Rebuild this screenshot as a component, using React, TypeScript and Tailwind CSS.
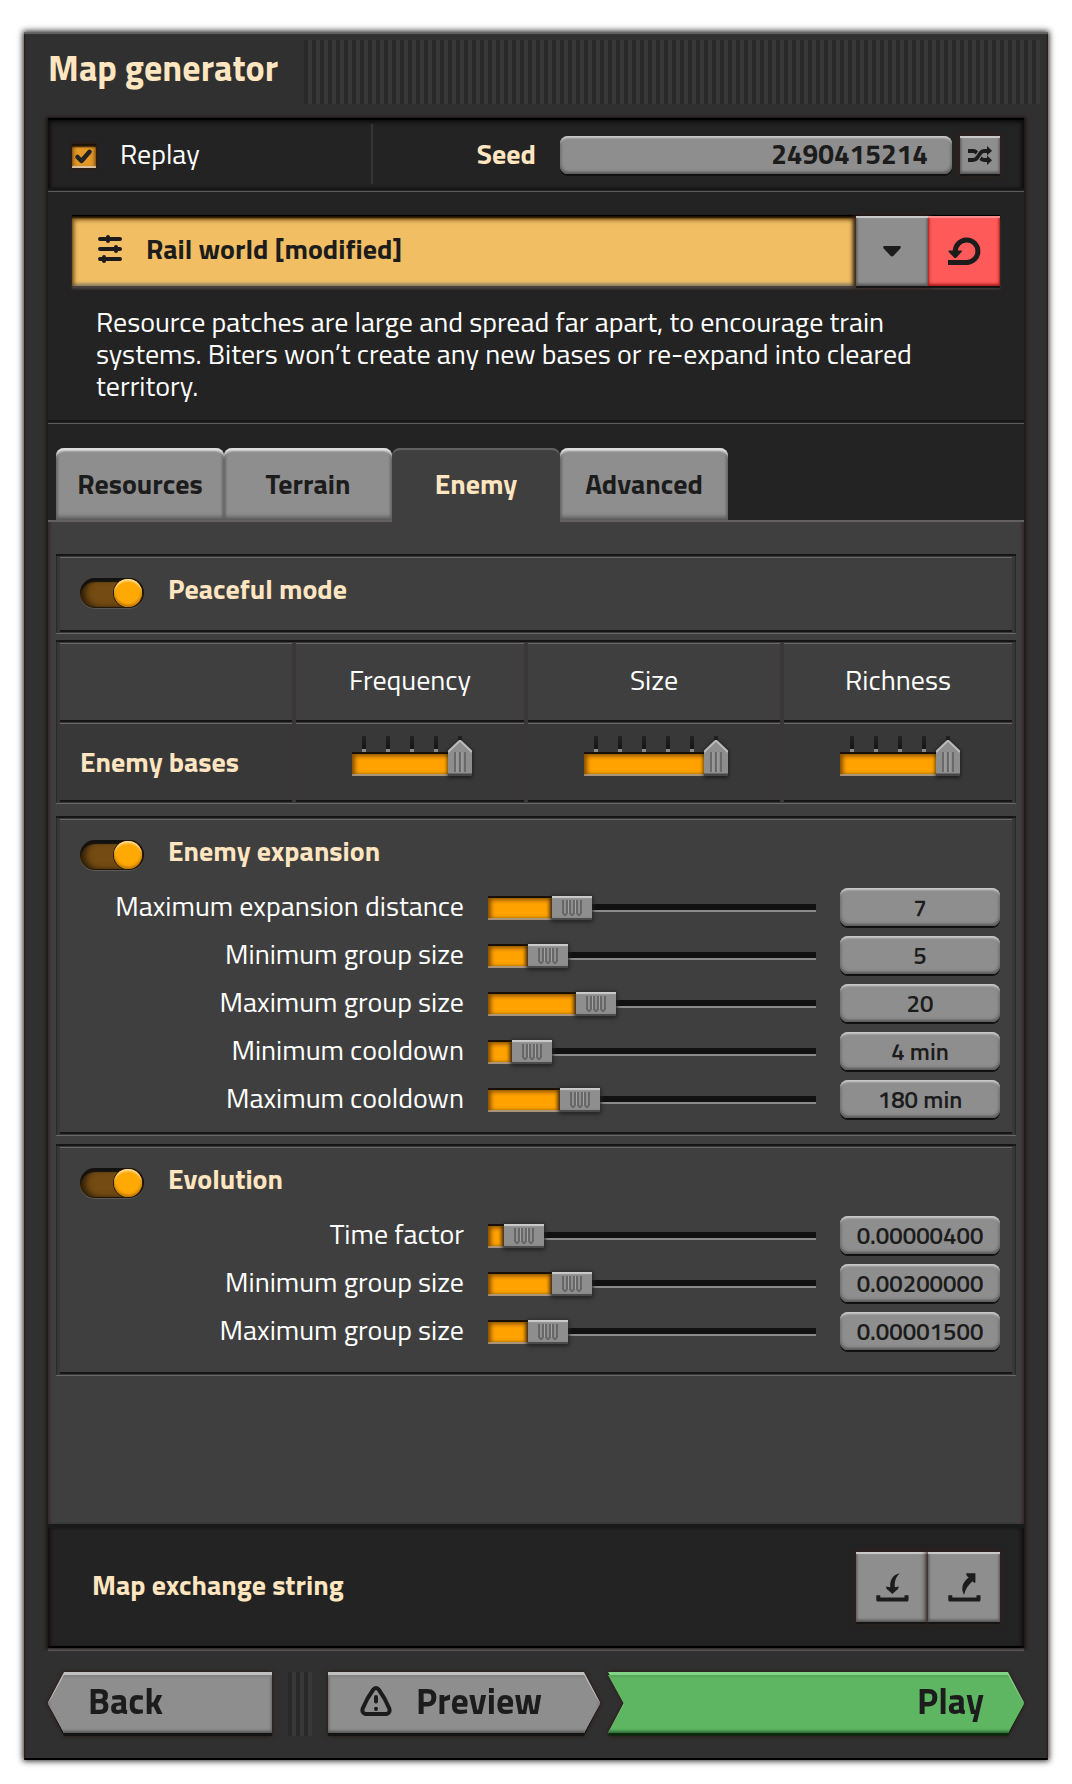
import React, { useState } from 'react';
import type { ReactNode } from 'react';

const BEVEL =
  'bg-[#8e8e8e] text-[#1c1c1c] shadow-[inset_0_3px_1px_-1px_#cdcbcb,inset_2px_0_3px_-1px_#5b5a5a,inset_-2px_0_3px_-1px_#5b5a5a,inset_0_-3px_3px_-1px_#555,0_2px_0_#161515,0_0_5px_2px_#2e201c]';

const RED_BEVEL =
  'bg-[#fe5a5a] text-[#1c1c1c] shadow-[inset_0_3px_1px_-1px_#ff8e8e,inset_2px_0_3px_-1px_#a01818,inset_-2px_0_3px_-1px_#a01818,inset_0_-3px_3px_-1px_#b02020,0_2px_0_#161515]';

const BEVEL_FIELD =
  'rounded-lg bg-[#8e8e8e] text-[#1c1c1c] outline-none shadow-[inset_0_3px_2px_-1px_#cdcbcb,inset_2px_0_3px_-1px_#666,inset_-2px_0_3px_-1px_#666,inset_0_-3px_3px_-1px_#555,0_2px_0_#111]';

const FILL =
  'h-6 bg-[#ffa200] shadow-[inset_0_3px_0_-1px_#171105,inset_0_5px_4px_-1px_#8a5000,inset_0_-2px_0_#a8967a,inset_4px_0_4px_-1px_#8a5000,inset_-3px_0_4px_-1px_#8a5000,inset_0_-5px_3px_-2px_#c88000]';

const CELL = 'h-[76px] shadow-[0_-1px_0_#6a696a,0_2px_0_#171616]';

function Groove() {
  return <div className="h-1 shrink-0 bg-[linear-gradient(#171616_50%,#242324_50%,#242324_75%,#5c5b5c_75%)]" />;
}

function ShuffleIcon() {
  return (
    <svg viewBox="0 0 24 19" className="h-[19px] w-6" fill="none" stroke="currentColor" strokeWidth="3.800">
      <path d="M0 5H5Q7.500 5 9 7L12.500 12Q14 14 16 14H20" />
      <path d="M0 14H5Q7.500 14 9 12L12.500 7Q14 5 16 5H20" stroke="#8e8e8e" strokeWidth="6" />
      <path d="M0 14H5Q7.500 14 9 12L12.500 7Q14 5 16 5H20" />
      <path d="M0 5H5Q6.500 5 7.500 6" />
      <path d="M19 0L24 4.800L19 9.400ZM19 9.600L24 14.200L19 19Z" fill="currentColor" stroke="none" />
    </svg>
  );
}

function PresetIcon() {
  return (
    <svg viewBox="0 0 24 28" className="h-7 w-6" fill="none" stroke="currentColor" strokeWidth="4" strokeLinecap="round">
      <path d="M2 4H22M2 14H22M2 24H22" />
      <path d="M10 2V6M18 12V16M6 22V26" />
    </svg>
  );
}

function ResetIcon() {
  return (
    <svg viewBox="0 0 33 28" className="h-7 w-[33px]" fill="none" stroke="currentColor" strokeWidth="5">
      <path d="M0 25.500H18.700A11.300 11.300 0 1 0 7.300 14.500" />
      <path d="M1 13.500H13.500Q14.500 14 13.500 15L8.500 20.500Q7.200 21.500 6 20.500L0.800 15Q0 14 1 13.500Z" fill="currentColor" stroke="none" />
    </svg>
  );
}

function ImportIcon() {
  return (
    <svg viewBox="0 0 33 29" className="h-[29px] w-[33px]" fill="currentColor">
      <path d="M0.300 22.300H4.300V24.500H28.500V22.300H32.500V27Q32.500 28.600 31 28.600H2Q0.300 28.600 0.300 27Z" />
      <path d="M10 13.500L14.300 14.200C13.600 7 17 1.500 23.700 0.300C19.800 4 18.400 8.500 18.800 14.200L22.700 13.500Q22.700 15.800 20.800 17L16.300 20.900L12 17Q10 15.800 10 13.500Z" />
    </svg>
  );
}

function ExportIcon() {
  return (
    <svg viewBox="0 0 33 29" className="h-[29px] w-[33px]" fill="currentColor">
      <path d="M0.300 22.300H4.300V24.500H28.500V22.300H32.500V27Q32.500 28.600 31 28.600H2Q0.300 28.600 0.300 27Z" />
      <path d="M18 0.300H27.400V9.700Q25.800 10 24.500 8.200C20 12 17.500 16 16 21.900C12.600 15 14.500 9 20.700 4.500Q18.200 3 18 0.300Z" />
    </svg>
  );
}

function WarningIcon() {
  return (
    <svg viewBox="0 0 32 30" className="h-[30px] w-8" fill="none" stroke="currentColor" strokeWidth="4" strokeLinejoin="round" strokeLinecap="round">
      <path d="M13.300 3.500Q16 0.500 18.700 3.500Q25 12 29.300 22.500Q30.500 27 26.500 28H5.500Q1.500 27 2.700 22.500Q7 12 13.300 3.500Z" />
      <path d="M16 11V15.500M16 22.800V23" />
    </svg>
  );
}

function Section({ children, tail = 'pb-5' }: { children: ReactNode; tail?: string }) {
  return (
    <section className="bg-[#393737] p-1 shadow-[inset_0_2px_0_#171616,inset_0_-1px_0_#6a696a,inset_1px_0_1px_#2a2929,inset_-1px_0_1px_#2a2929]">
      <div className={`${tail} bg-[#403f40] pl-5 pr-3 pt-5 shadow-[0_-1px_0_#6a696a,0_2px_0_#171616]`}>{children}</div>
    </section>
  );
}

function SectionSwitch({ id, label }: { id: string; label: string }) {
  return (
    <div className="flex h-8 items-start gap-6">
      <input
        id={id}
        type="checkbox"
        role="switch"
        defaultChecked
        className="relative h-[30px] w-16 shrink-0 appearance-none rounded-full bg-[#3a2c18] shadow-[inset_0_4px_1px_#131211,inset_5px_0_6px_#2c1d08,inset_-1px_-1px_1px_#131211,0_1px_1px_#5b5a5a] before:absolute before:left-0 before:top-px before:h-7 before:w-7 before:rounded-full before:bg-[#8e8e8e] before:content-[''] checked:bg-[#744b12] checked:before:left-[34px] checked:before:bg-[#ffaa04] checked:before:shadow-[inset_0_3px_2px_-1px_#ffe1a0,inset_0_-2px_3px_#b87400,0_0_0_1px_#241a0b]"
      />
      <label htmlFor={id} className="text-[28px] font-bold leading-[22px] text-[#ffe6c0]">
        {label}
      </label>
    </div>
  );
}

function RangeRow({ id, label, start, value }: { id: string; label: string; start: number; value: string }) {
  const [pos, setPos] = useState(start);
  const share = pos / 36;
  return (
    <div className="grid grid-cols-[1fr_328px_160px] gap-6">
      <label htmlFor={id} className="text-right text-[28px] leading-9 text-white">
        {label}
      </label>
      <div className="relative flex h-10 items-center">
        <div className="absolute inset-x-0 top-4 h-2 border-b-2 border-[#8c8b8b] bg-[#111]" />
        <div className="absolute left-0 top-2" style={{ width: `calc((100% - 40px) * ${share})` }}>
          <div className={FILL} />
        </div>
        <div
          className="absolute top-2 flex h-6 w-10 items-center justify-center bg-[#8e8e8e] shadow-[inset_0_3px_1px_-1px_#cdcbcb,inset_0_-3px_1px_-1px_#494848,0_1px_4px_1px_#222]"
          style={{ left: `calc((100% - 40px) * ${share})` }}
        >
          <svg viewBox="0 0 20 16" className="h-4 w-5" fill="none">
            <path d="M1 0V13L3 15.500L5 13V0M8 0V13L10 15.500L12 13V0M15 0V13L17 15.500L19 13V0" stroke="#686767" strokeWidth="2" />
            <path d="M6.500 0V13M13.500 0V13" stroke="#a5a4a4" />
          </svg>
        </div>
        <input
          id={id}
          type="range"
          min={0}
          max={36}
          value={pos}
          onChange={(e) => setPos(Number(e.target.value))}
          className="absolute inset-0 h-full w-full opacity-0"
        />
      </div>
      <input
        aria-label={`${label} value`}
        defaultValue={value}
        className={`${BEVEL_FIELD} h-[38px] w-full min-w-0 text-center text-[24px] font-semibold`}
      />
    </div>
  );
}

function NotchSlider({ label, steps }: { label: string; steps: number }) {
  const [value, setValue] = useState(steps - 1);
  return (
    <div className="relative mx-auto h-10" style={{ width: steps * 24 }}>
      <div className="flex justify-between px-[10px]">
        {Array.from({ length: steps }, (_, i) => (
          <div key={i} className="h-4 w-1 bg-[linear-gradient(#222_0,#161616_80%,#8c8b8b_81%)]" />
        ))}
      </div>
      <div className={FILL} />
      <svg viewBox="0 0 24 36" className="absolute bottom-0 h-9 w-6 drop-shadow-[0_1px_2px_#111]" style={{ left: value * 24 }}>
        <path d="M0 12L12 0.500L24 12V36H0Z" fill="#8e8e8e" />
        <path d="M0 12L12 0.500L24 12" fill="none" stroke="#bdbcbc" strokeWidth="2" />
        <path d="M0 33.500H24V36H0Z" fill="#474646" />
        <path d="M7 12V32M12 12V32M17 12V32" stroke="#6a6969" strokeWidth="2" />
        <path d="M9 12V32M14 12V32" stroke="#a5a4a4" />
      </svg>
      <input
        aria-label={`Enemy bases ${label}`}
        type="range"
        min={0}
        max={steps - 1}
        value={value}
        onChange={(e) => setValue(Number(e.target.value))}
        className="absolute inset-0 h-full w-full opacity-0"
      />
    </div>
  );
}

const levels = [
  { name: 'Frequency', steps: 5, width: 'w-[228px]' },
  { name: 'Size', steps: 6, width: 'w-[252px]' },
  { name: 'Richness', steps: 5, width: 'w-[228px]' },
];

const expansion = [
  { id: 'exp-dist', label: 'Maximum expansion distance', start: 8, value: '7' },
  { id: 'exp-min', label: 'Minimum group size', start: 5, value: '5' },
  { id: 'exp-max', label: 'Maximum group size', start: 11, value: '20' },
  { id: 'exp-mincd', label: 'Minimum cooldown', start: 3, value: '4 min' },
  { id: 'exp-maxcd', label: 'Maximum cooldown', start: 9, value: '180 min' },
];

const evolution = [
  { id: 'evo-time', label: 'Time factor', start: 2, value: '0.00000400' },
  { id: 'evo-min', label: 'Minimum group size', start: 8, value: '0.00200000' },
  { id: 'evo-max', label: 'Maximum group size', start: 5, value: '0.00001500' },
];

const tabs = ['Resources', 'Terrain', 'Enemy', 'Advanced'];

const shapes = {
  back: '[clip-path:polygon(16px_0,100%_0,100%_100%,16px_100%,0_50%)]',
  preview: '[clip-path:polygon(0_0,calc(100%-16px)_0,100%_50%,calc(100%-16px)_100%,0_100%)]',
  play: '[clip-path:polygon(0_0,calc(100%-16px)_0,100%_50%,calc(100%-16px)_100%,0_100%,16px_50%)]',
};

function ArrowButton({ shape, green, className, children }: { shape: keyof typeof shapes; green?: boolean; className: string; children: ReactNode }) {
  const clip = shapes[shape];
  const edge = green ? 'bg-[#0d2a10]' : 'bg-[#151414]';
  const rim = green ? 'bg-[#84d488]' : 'bg-[#c2c1c1]';
  const face = green
    ? 'bg-[#5eb663] shadow-[inset_0_-3px_3px_-1px_#2f6a33,inset_0_3px_3px_-1px_#56a45a]'
    : 'bg-[#8e8e8e] shadow-[inset_0_-3px_3px_-1px_#555,inset_0_3px_3px_-1px_#838282,inset_-2px_0_3px_-1px_#6b6a6a,inset_2px_0_3px_-1px_#6b6a6a]';
  return (
    <button className={`${className} relative flex h-16 items-start text-[36px] font-bold leading-[58px] text-[#1c1c1c] drop-shadow-[0_0_2px_#2a1712]`}>
      <span className={`absolute inset-0 ${edge} ${clip}`} />
      <span className={`absolute inset-x-0 bottom-[3px] top-0 ${rim} ${clip}`} />
      <span className={`absolute inset-x-0 bottom-[3px] top-[3px] ${face} ${clip}`} />
      <span className="relative flex items-center gap-6">{children}</span>
    </button>
  );
}

export default function App() {
  const [tab, setTab] = useState('Enemy');
  return (
    <div className="flex min-h-screen flex-col bg-white px-6 pb-6 pt-8 font-['Titillium_Web','Lato',sans-serif]">
      <div className="flex flex-1 flex-col bg-[#313031] px-6 pb-6 pt-2 shadow-[inset_0_3px_1px_-1px_#686666,inset_2px_0_2px_-1px_#2a1712,inset_-2px_0_2px_-1px_#2a1712,inset_0_-3px_0_-1px_#000,0_0_6px_1px_#222]">
        <header className="mb-4 flex items-start gap-[26px]">
          <h1 className="text-[36px] font-bold leading-[56px] text-[#ffe6c0]">Map generator</h1>
          <div className="-mr-4 h-16 flex-1 bg-[repeating-linear-gradient(90deg,#2a292a_0_4px,#393839_4px_8px)]" />
        </header>

        <main className="flex flex-1 flex-col bg-[#242324] shadow-[0_-2px_0_#000,0_-1px_3px_2px_#1d1513,0_3px_1px_#5f5e5e]">
          <div className="flex h-[68px] shrink-0 shadow-[inset_0_3px_4px_-1px_#0d0d0d,inset_4px_0_4px_-2px_#0f0b09,inset_-4px_0_4px_-2px_#0f0b09]">
            <div className="flex w-[322px] items-start gap-6 pl-6 pt-4">
              <div className="relative mt-2 h-6 w-6">
                <input
                  id="replay"
                  type="checkbox"
                  defaultChecked
                  className="peer block h-6 w-6 appearance-none bg-[#3a2c18] shadow-[inset_0_4px_2px_-1px_#1c1005,inset_0_-3px_1px_-1px_#d9c3a2,inset_2px_0_4px_-1px_#6f430a,inset_-2px_0_4px_-1px_#6f430a,0_0_3px_1px_#2e1a10] checked:bg-[#e39827]"
                />
                <svg viewBox="0 0 24 24" className="pointer-events-none absolute inset-0 hidden h-6 w-6 peer-checked:block" fill="none" stroke="#242324" strokeWidth="4.500" strokeLinecap="round" strokeLinejoin="round">
                  <path d="M5.500 13L9.500 17L17.500 7.800" />
                </svg>
              </div>
              <label htmlFor="replay" className="text-[28px] leading-9 text-white">
                Replay
              </label>
            </div>
            <div className="mb-1 mt-1 w-1 bg-[linear-gradient(90deg,#242324_25%,#353435_25%,#353435_75%,#242324_75%)]" />
            <div className="flex flex-1 items-start justify-end pr-6 pt-4">
              <label htmlFor="seed" className="mr-6 text-[28px] font-bold leading-9 text-[#ffe6c0]">
                Seed
              </label>
              <input
                id="seed"
                defaultValue="2490415214"
                className={`${BEVEL_FIELD} mr-2 h-[38px] w-[392px] pb-1 pr-6 text-right text-[28px] font-bold leading-8`}
              />
              <button aria-label="Randomize seed" className={`${BEVEL} flex h-[38px] w-10 items-center justify-center`}>
                <ShuffleIcon />
              </button>
            </div>
          </div>
          <Groove />

          <div className="px-6 pb-[18px] pt-6">
            <div className="flex h-[70px] shadow-[0_3px_2px_#4a4240,0_-1px_1px_#000]">
              <button className="flex flex-1 items-start gap-6 bg-[#f1be64] pl-[26px] text-[28px] font-bold leading-[66px] text-[#1c1c1c] shadow-[inset_0_3px_2px_-1px_#1a0f00,inset_0_5px_4px_-1px_#7a5418,inset_4px_0_4px_-2px_#7a5418,inset_-4px_0_4px_-2px_#5a3c0d,inset_0_-4px_3px_-1px_#a59372]">
                <span className="flex h-[66px] items-center">
                  <PresetIcon />
                </span>
                Rail world [modified]
              </button>
              <button aria-label="Choose preset" className={`${BEVEL} relative flex w-[72px] items-center justify-center`}>
                <svg viewBox="0 0 18 11" className="h-[11px] w-[18px]" fill="currentColor">
                  <path d="M1 0H17Q18.500 1 17.300 2.500L10.500 9.800Q9 11.400 7.500 9.800L0.700 2.500Q-0.500 1 1 0Z" />
                </svg>
              </button>
              <button aria-label="Reset preset" className={`${RED_BEVEL} relative flex w-[72px] items-center justify-center`}>
                <ResetIcon />
              </button>
            </div>
            <p className="mt-5 px-6 text-[28px] leading-8 text-white">
              Resource patches are large and spread far apart, to encourage train systems. Biters won’t create any new bases or
              re-expand into cleared territory.
            </p>
          </div>
          <Groove />

          <div role="tablist" className="flex h-24 shrink-0 items-start px-2 pt-6">
            {tabs.map((name) => (
              <button
                key={name}
                role="tab"
                aria-selected={tab === name}
                onClick={() => setTab(name)}
                className={
                  tab === name
                    ? 'relative z-10 h-[76px] w-[168px] rounded-t-lg bg-[#403f40] pb-1 text-[28px] font-bold text-[#ffe6c0] shadow-[inset_0_3px_1px_-1px_#656264]'
                    : 'h-[72px] w-[168px] rounded-t-lg bg-[#8e8e8e] text-[28px] font-bold text-[#1c1c1c] shadow-[inset_0_4px_2px_-1px_#e0dfdf,inset_2px_0_3px_-1px_#555,inset_-2px_0_3px_-1px_#555,inset_0_-4px_4px_-1px_#5a5959]'
                }
              >
                {name}
              </button>
            ))}
          </div>

          <div className="flex flex-1 flex-col bg-[#403f40] px-2 pb-6 pt-[34px] shadow-[inset_0_3px_1px_-1px_#656264,inset_3px_0_3px_-1px_#36292a,inset_-3px_0_3px_-1px_#36292a]">
            <Section>
              <SectionSwitch id="peaceful" label="Peaceful mode" />
            </Section>

            <table className="mt-[6px] w-full table-fixed border-separate border-spacing-1 bg-[#393737] shadow-[inset_0_2px_0_#171616,inset_0_-1px_0_#6a696a,inset_1px_0_1px_#2a2929,inset_-1px_0_1px_#2a2929]">
              <thead>
                <tr>
                  <td className={`${CELL} bg-[#403f40]`} />
                  {levels.map((l) => (
                    <th key={l.name} scope="col" className={`${CELL} ${l.width} bg-[#403f40] pb-1 pl-12 pr-12 text-center text-[28px] font-normal text-white`}>
                      {l.name}
                    </th>
                  ))}
                </tr>
              </thead>
              <tbody>
                <tr>
                  <th scope="row" className={`${CELL} bg-[#393839] pl-5 text-left text-[28px] font-bold text-[#ffe6c0]`}>
                    Enemy bases
                  </th>
                  {levels.map((l) => (
                    <td key={l.name} className={`${CELL} bg-[#393839] pb-3 pl-14 pr-[52px]`}>
                      <NotchSlider label={l.name} steps={l.steps} />
                    </td>
                  ))}
                </tr>
              </tbody>
            </table>

            <div className="mt-3 flex flex-col gap-2">
              <Section tail="pb-3">
                <SectionSwitch id="expansion" label="Enemy expansion" />
                <div className="mt-4 flex flex-col gap-2">
                  {expansion.map((r) => (
                    <RangeRow key={r.id} {...r} />
                  ))}
                </div>
              </Section>
              <Section>
                <SectionSwitch id="evolution" label="Evolution" />
                <div className="mt-4 flex flex-col gap-2">
                  {evolution.map((r) => (
                    <RangeRow key={r.id} {...r} />
                  ))}
                </div>
              </Section>
            </div>
          </div>

          <div className="flex h-[124px] shrink-0 items-center border-t-4 border-[#1b1a1b] pb-[2px] pl-11 pr-6 shadow-[inset_4px_0_4px_-2px_#0f0b09,inset_-4px_0_4px_-2px_#0f0b09,inset_0_-3px_1px_-1px_#000]">
            <h2 className="flex-1 pb-1 text-[28px] font-bold text-[#ffe6c0]">Map exchange string</h2>
            <button aria-label="Import string" className={`${BEVEL} relative flex h-[70px] w-[72px] items-center justify-center`}>
              <ImportIcon />
            </button>
            <button aria-label="Export string" className={`${BEVEL} relative flex h-[70px] w-[72px] items-center justify-center`}>
              <ExportIcon />
            </button>
          </div>
        </main>

        <footer className="mt-6 flex">
          <ArrowButton shape="back" className="w-56 pl-10">
            Back
          </ArrowButton>
          <div className="mx-4 h-16 w-6 bg-[repeating-linear-gradient(90deg,#2a292a_0_4px,#393839_4px_8px)]" />
          <ArrowButton shape="preview" className="w-[272px] pl-8">
            <WarningIcon />
            Preview
          </ArrowButton>
          <ArrowButton shape="play" green className="ml-2 flex-1 justify-end pr-10">
            Play
          </ArrowButton>
        </footer>
      </div>
    </div>
  );
}
